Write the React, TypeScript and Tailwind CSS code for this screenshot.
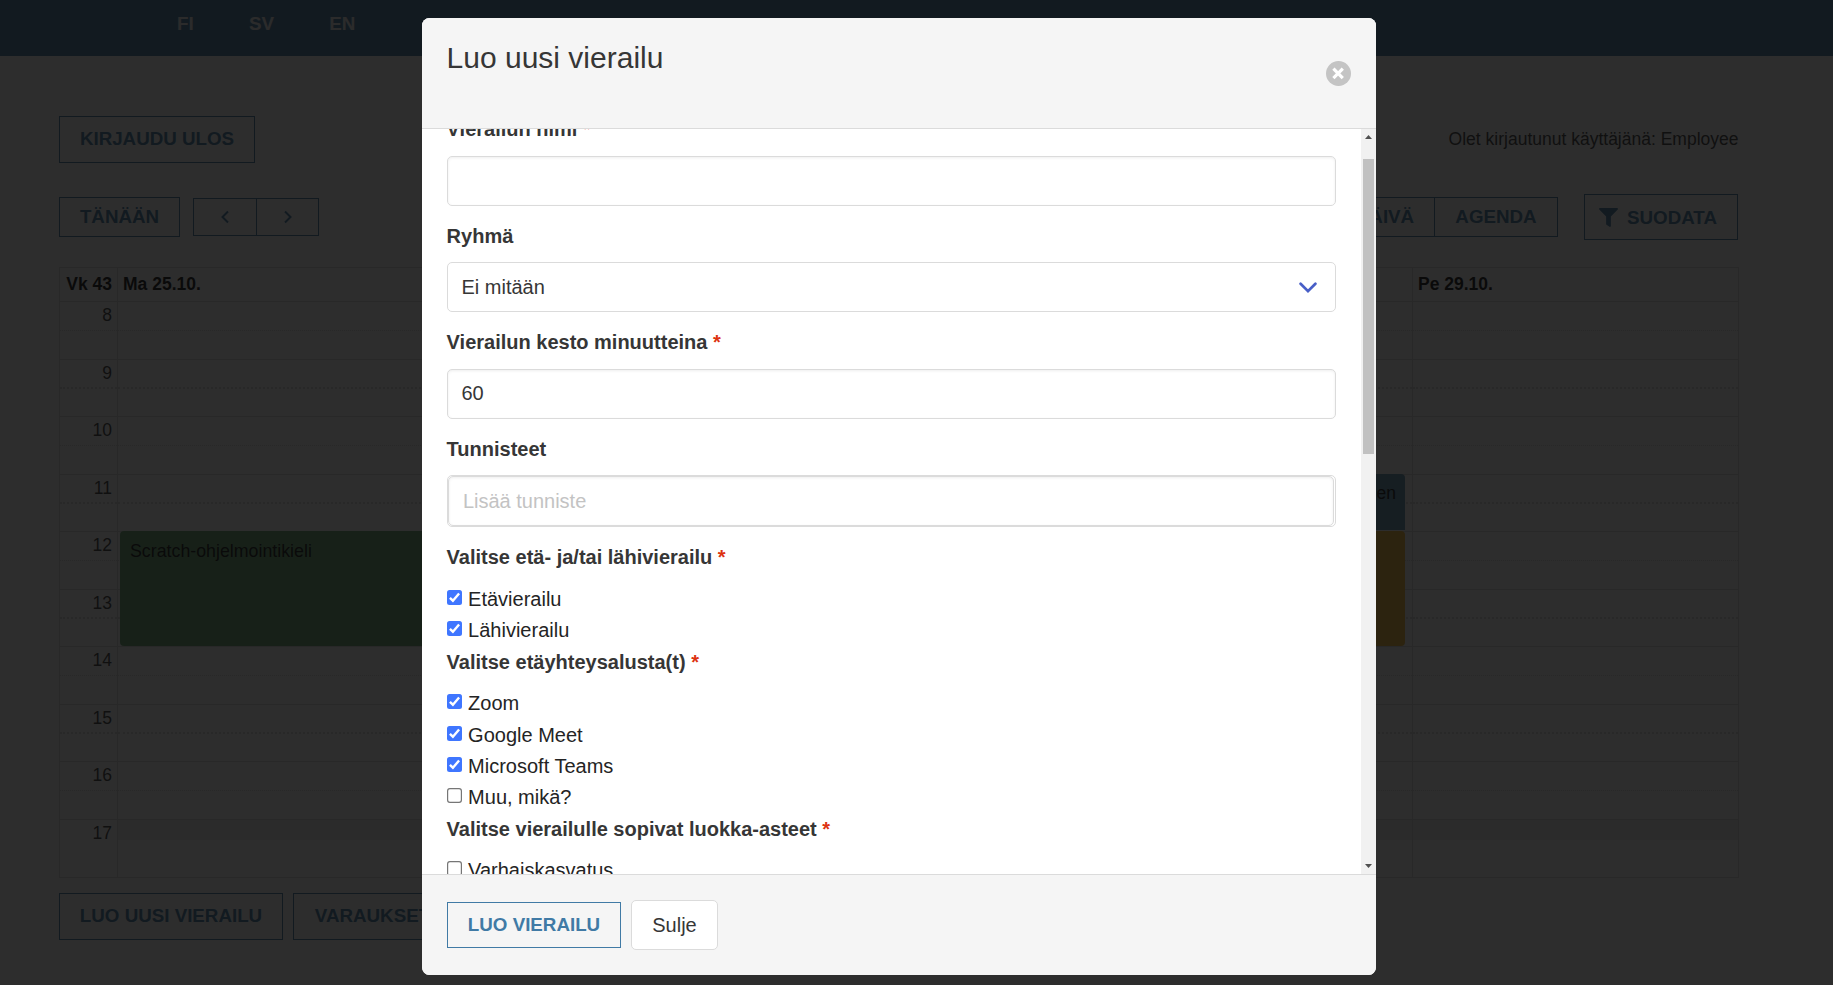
import React from "react";

const hours = [8, 9, 10, 11, 12, 13, 14, 15, 16, 17];
const days = [
  { id: "ma", label: "Ma 25.10.", cell: "flex-1", pad: "pl-[5px]" },
  { id: "ti", label: "", cell: "flex-1", pad: "" },
  { id: "ke", label: "", cell: "flex-1", pad: "" },
  { id: "to", label: "", cell: "flex-1", pad: "" },
  { id: "pe", label: "Pe 29.10.", cell: "w-[325px] shrink-0", pad: "pl-[5px]" },
];

const outline =
  "flex items-center justify-center border border-[#407aa5] text-[18.75px] leading-none font-bold text-[#407aa5] whitespace-nowrap";

function Chevron({ d }: { d: string }) {
  return (
    <svg width="10" height="14" viewBox="0 0 10 14" fill="none" stroke="#407aa5" strokeWidth="2">
      <path d={d} />
    </svg>
  );
}

function Toolbar() {
  return (
    <div className="mt-[31px] flex h-[46px] items-center">
      <button className={`${outline} h-10 w-[121px]`}>TÄNÄÄN</button>
      <div className="ml-[13px] flex h-[38px] w-[126px] border border-[#407aa5]">
        <div className="flex w-[63px] items-center justify-center border-r border-[#407aa5]">
          <Chevron d="M8 1.5 2.5 7 8 12.5" />
        </div>
        <div className="flex flex-1 items-center justify-center">
          <Chevron d="M2 1.5 7.5 7 2 12.5" />
        </div>
      </div>
      <div className="ml-auto flex h-10">
        <button className={`${outline} w-[99px]`}>PÄIVÄ</button>
        <button className={`${outline} -ml-px w-[124px]`}>AGENDA</button>
      </div>
      <button className={`${outline} ml-[26px] h-[46px] w-[154px] pr-[6px]`}>
        <svg className="mr-[9px]" width="19" height="19" viewBox="0 0 512 512" fill="#407aa5">
          <path d="M487.976 0H24.028C2.71 0-8.047 25.866 7.058 40.971L192 225.941V432c0 7.831 3.821 15.17 10.237 19.662l80 55.98C298.02 518.69 320 507.493 320 487.98V225.941l184.947-184.97C520.021 25.896 509.338 0 487.976 0z" />
        </svg>
        <span className="pt-[2px]">SUODATA</span>
      </button>
    </div>
  );
}

const halfSlot = (h: number) =>
  h === 17
    ? "h-[28.75px]"
    : h % 2 === 1
      ? "h-[29.25px] border-b-2 border-dotted border-[#dddddd]"
      : "h-[28.75px] border-b border-dotted border-[#dddddd]";

function Calendar() {
  return (
    <div className="relative mt-[27px] h-[611px] w-[1680px] border border-[#dddddd] text-[17.5px] text-[#363636]">
      <div className="flex h-[33px] font-bold text-[#0a0a0a]">
        <div className="flex w-[58px] shrink-0 items-center justify-end border-r border-[#dddddd] pr-[5px] pt-[1px] leading-none whitespace-nowrap">
          Vk 43
        </div>
        {days.map((d) => (
          <div
            key={d.id}
            className={`flex items-center border-r border-[#dddddd] pt-[1px] leading-none last:border-r-0 ${d.cell} ${d.pad}`}
          >
            {d.label}
          </div>
        ))}
      </div>
      {hours.map((h) => (
        <div key={h} className={`flex border-t border-[#dddddd] ${h === 17 ? "h-[58.5px]" : "h-[57.5px]"}`}>
          <div className="w-[58px] shrink-0 border-r border-[#dddddd]">
            <div className={halfSlot(h)}>
              <div className="pr-[5px] text-right leading-[26px]">{h}</div>
            </div>
          </div>
          {days.map((d) => (
            <div key={d.id} className={`border-r border-[#dddddd] last:border-r-0 ${d.cell}`}>
              {h === 17 ? <div className="h-[20px] bg-[#f0f0f0]" /> : <div className={halfSlot(h)} />}
            </div>
          ))}
        </div>
      ))}
      <div className="absolute top-[263px] left-[60px] h-[115px] w-[316px] rounded bg-[#66a66e] pt-[9px] pl-[10px] text-[17.8px] leading-[22px] text-[#0a0a0a]">
        Scratch-ohjelmointikieli
      </div>
      <div className="absolute top-[206px] left-[1033px] h-[56px] w-[312px] rounded-t bg-[#5b93b0] pt-[8px] pr-[9px] text-right leading-[22px] text-[#0a0a0a]">
        en
      </div>
      <div className="absolute top-[263px] left-[1033px] h-[115px] w-[312px] rounded bg-[#f5b52e]" />
    </div>
  );
}

function Label({ children, required, gap }: { children: React.ReactNode; required?: boolean; gap: string }) {
  return (
    <div className={`text-[20px] leading-[30px] font-bold text-[#363636] ${gap}`}>
      {children}
      {required && <span className="text-[#dd3311]"> *</span>}
    </div>
  );
}

const field =
  "flex h-[50px] shrink-0 items-center rounded-[5px] border border-[#dbdbdb] bg-white pl-[13.9px] text-[20px] leading-[30px] text-[#363636]";

function Check({ label, checked }: { label: string; checked?: boolean }) {
  return (
    <div className="flex h-[31.25px] shrink-0 text-[20px] leading-[30px] text-[#242424]">
      <svg className="mt-[6px] mr-[6.5px]" width="15" height="15" viewBox="0 0 15 15">
        {checked ? (
          <>
            <rect width="15" height="15" rx="2.5" fill="#3f76ff" />
            <path d="M2.9 7.9 5.9 10.7 12.1 3.5" fill="none" stroke="#fff" strokeWidth="2.4" />
          </>
        ) : (
          <rect x="0.6" y="0.6" width="13.8" height="13.8" rx="2.3" fill="#fff" stroke="#767676" strokeWidth="1.2" />
        )}
      </svg>
      <span>{label}</span>
    </div>
  );
}

function Modal() {
  return (
    <div className="flex h-[957px] w-[954px] flex-col overflow-hidden rounded-[7.5px] bg-white">
      <div className="flex h-[111px] shrink-0 items-center border-b border-[#dbdbdb] bg-[#f5f5f5] pr-[25px] pl-[24.6px]">
        <h1 className="flex-1 pb-[30px] text-[30px] leading-[30px] text-[#363636]">Luo uusi vierailu</h1>
        <svg width="25" height="25" viewBox="0 0 25 25">
          <circle cx="12.5" cy="12.5" r="12.5" fill="#c4c4c4" />
          <path d="M7.4 7.7 16.8 17.1M16.8 7.7 7.4 17.1" stroke="#fff" strokeWidth="3.2" />
        </svg>
      </div>
      <div className="flex min-h-0 flex-1">
        <div className="flex flex-1 flex-col overflow-hidden pr-[25px] pl-[24.6px]">
          <div className="-mt-[15px] flex flex-col">
            <Label required gap="mb-[12px]">Vierailun nimi</Label>
            <div className={`${field} shadow-[inset_0_1px_3px_rgba(10,10,10,0.07)]`} />
            <Label gap="mt-[15px] mb-[11px]">Ryhmä</Label>
            <div className={`${field} justify-between pr-[18px]`}>
              <span>Ei mitään</span>
              <svg width="18" height="12" viewBox="0 0 18 12" className="mt-[2px]" fill="none" stroke="#485fc7" strokeWidth="2.7">
                <path d="M1.6 1.8 9 9.2 16.4 1.8" strokeLinecap="round" />
              </svg>
            </div>
            <Label required gap="mt-[15px] mb-[12px]">Vierailun kesto minuutteina</Label>
            <div className={`${field} pb-[2px] shadow-[inset_0_1px_3px_rgba(10,10,10,0.07)]`}>60</div>
            <Label gap="mt-[15px] mb-[11px]">Tunnisteet</Label>
            <div className="h-[52px] rounded-[5px] border border-[#dbdbdb] pr-[1px]">
              <div className={`${field} shadow-[inset_0_1px_3px_rgba(10,10,10,0.07)]`}>
                <span className="ml-[0.4px] text-[#c3c3c3]">Lisää tunniste</span>
              </div>
            </div>
            <Label required gap="mt-[15px] mb-[11.95px]">Valitse etä- ja/tai lähivierailu</Label>
            <Check label="Etävierailu" checked />
            <Check label="Lähivierailu" checked />
            <Label required gap="mt-[0.3px] mb-[11.7px]">Valitse etäyhteysalusta(t)</Label>
            <Check label="Zoom" checked />
            <Check label="Google Meet" checked />
            <Check label="Microsoft Teams" checked />
            <Check label="Muu, mikä?" />
            <Label required gap="mt-[0.55px] mb-[11.25px]">Valitse vierailulle sopivat luokka-asteet</Label>
            <Check label="Varhaiskasvatus" />
          </div>
        </div>
        <div className="flex w-[15px] shrink-0 flex-col items-center bg-[#f1f1f1]">
          <svg className="mt-[6px] shrink-0" width="7" height="4" viewBox="0 0 7 4" fill="#505050">
            <path d="M3.5 0 7 4H0z" />
          </svg>
          <div className="mt-[20px] h-[295px] w-[11px] shrink-0 bg-[#c1c1c1]" />
          <svg className="mt-auto mb-[6px] shrink-0" width="7" height="4" viewBox="0 0 7 4" fill="#505050">
            <path d="M0 0H7L3.5 4z" />
          </svg>
        </div>
      </div>
      <div className="flex h-[101px] shrink-0 items-center border-t border-[#dbdbdb] bg-[#f5f5f5] px-[25px]">
        <button className={`${outline} h-[46px] w-[174px]`}>LUO VIERAILU</button>
        <button className="ml-[10px] flex h-[50px] w-[87px] items-center justify-center rounded-[5px] border border-[#dbdbdb] bg-white text-[20px] text-[#363636]">
          Sulje
        </button>
      </div>
    </div>
  );
}

export default function App() {
  return (
    <div className="relative h-[985px] w-[1833px] overflow-hidden bg-white font-['Liberation_Sans',Arial,sans-serif]">
      <header className="flex h-14 items-center gap-[55.3px] bg-[#407aa5] pb-[7px] pl-[177px] text-[18.75px] leading-none font-bold text-[#f0f0f0]">
        <span>FI</span>
        <span>SV</span>
        <span>EN</span>
      </header>
      <main className="flex flex-col pt-[60px] pr-[95px] pl-[59px]">
        <div className="flex h-[47px] items-center justify-between">
          <button className={`${outline} h-[47px] w-[196px] pb-[1px]`}>KIRJAUDU ULOS</button>
          <span className="-mr-[0.5px] text-[17.5px] text-[#363636]">Olet kirjautunut käyttäjänä: Employee</span>
        </div>
        <Toolbar />
        <Calendar />
        <div className="mt-[15px] flex gap-[10px]">
          <button className={`${outline} h-[47px] w-[224px]`}>LUO UUSI VIERAILU</button>
          <button className={`${outline} h-[47px] w-[159px]`}>VARAUKSET</button>
        </div>
      </main>
      <div className="absolute inset-0 flex items-start bg-[rgba(10,10,10,0.86)] pt-[18px] pl-[422px]">
        <Modal />
      </div>
    </div>
  );
}
